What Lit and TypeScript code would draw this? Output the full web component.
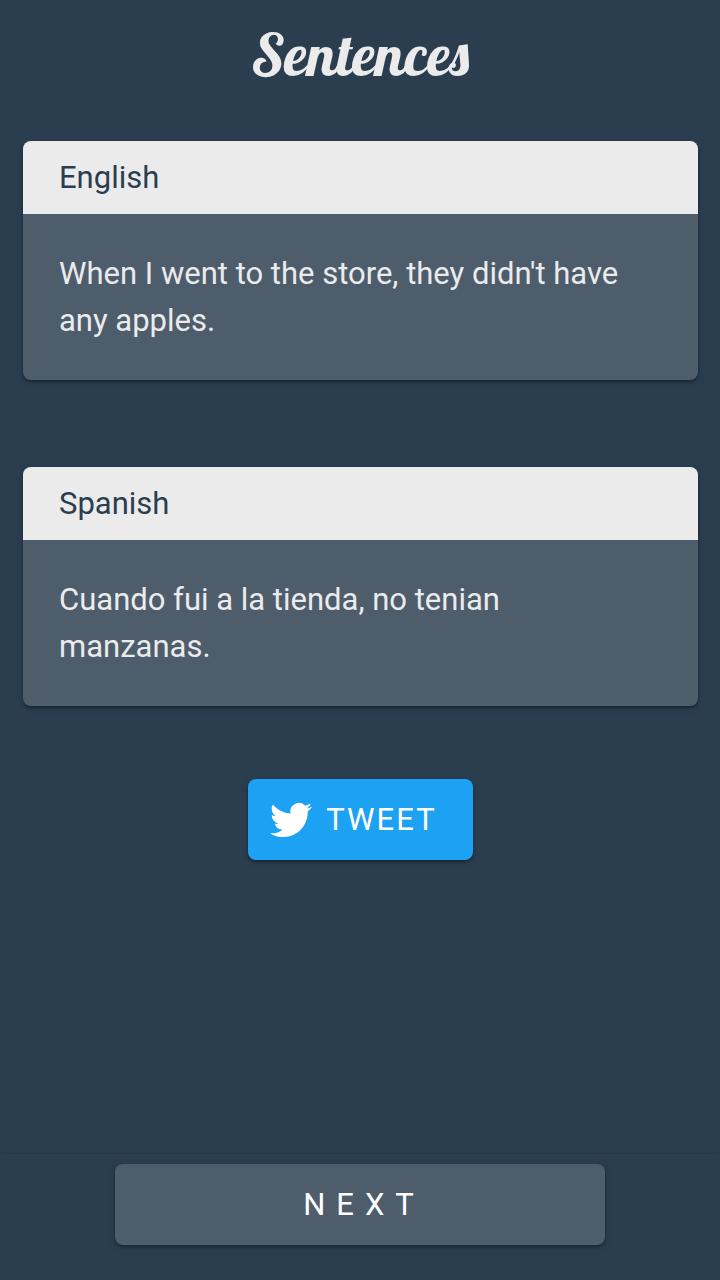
import { LitElement, html, css } from "lit";
import { customElement, property, state } from "lit/decorators.js";

const raised = css`
  .raised {
    border-radius: 8px;
    box-shadow: 0 2px 6px rgba(0, 0, 0, 0.28), 0 2px 2px rgba(0, 0, 0, 0.2);
  }
`;

@customElement("sentence-card")
export class SentenceCard extends LitElement {
  @property() language = "";
  @property() lang = "en";
  @property() sentence = "";

  static styles = [
    raised,
    css`
      :host {
        display: block;
      }
      .card {
        overflow: hidden;
        background: #4e5d6c;
      }
      .heading {
        margin: 0;
        padding: 13px 36px;
        background: #ebebeb;
        color: #2b3e50;
        font-size: 31px;
        font-weight: 400;
        line-height: 47px;
      }
      .sentence {
        margin: 0;
        padding: 36px 44px 36px 36px;
        color: #ebebeb;
        font-size: 31px;
        line-height: 47px;
      }
    `,
  ];

  render() {
    return html`
      <section class="card raised">
        <h2 class="heading">${this.language}</h2>
        <p class="sentence" lang=${this.lang}>${this.sentence}</p>
      </section>
    `;
  }
}

@customElement("app-root")
export class AppRoot extends LitElement {
  @state() private index = 0;

  private pairs = [
    {
      english: "When I went to the store, they didn't have any apples.",
      spanish: "Cuando fui a la tienda, no tenian manzanas.",
    },
  ];

  static styles = [
    raised,
    css`
      :host {
        display: flex;
        flex-direction: column;
        min-height: 100vh;
        background: #2b3e50;
        color: #ebebeb;
        font-family: Roboto, "Noto Sans", sans-serif;
      }
      .title {
        margin: 0;
        padding: 16px 0 49px;
        text-align: center;
        font-family: Lobster, "Liberation Serif", serif;
        font-size: 59px;
        font-weight: 400;
        line-height: 76px;
      }
      .content {
        flex: 1;
        display: flex;
        flex-direction: column;
        padding: 0 22px 0 23px;
      }
      .cards {
        display: grid;
        gap: 87px;
      }
      .button {
        display: flex;
        align-items: center;
        justify-content: center;
        height: 81px;
        border: 0;
        color: #fff;
        font-family: inherit;
        font-size: 31px;
        text-decoration: none;
        text-transform: uppercase;
        cursor: pointer;
      }
      .tweet {
        align-self: center;
        gap: 14px;
        margin-top: 73px;
        padding: 0 36px 0 22px;
        background: #1da1f2;
        letter-spacing: 2px;
      }
      .bird {
        width: 42px;
        height: 42px;
        fill: currentColor;
      }
      .footer {
        display: flex;
        justify-content: center;
        padding: 10px 0 35px;
        box-shadow: 0 -1px 2px rgba(0, 0, 0, 0.16);
      }
      .next {
        width: 68%;
        padding: 0 0 0 8px;
        background: #4e5d6c;
        letter-spacing: 11px;
      }
    `,
  ];

  private next() {
    this.index = (this.index + 1) % this.pairs.length;
  }

  render() {
    const pair = this.pairs[this.index];
    return html`
      <header><h1 class="title">Sentences</h1></header>
      <main class="content">
        <div class="cards">
          <sentence-card language="English" lang="en" .sentence=${pair.english}></sentence-card>
          <sentence-card language="Spanish" lang="es" .sentence=${pair.spanish}></sentence-card>
        </div>
        <a class="button tweet raised" href="#tweet">
          <svg class="bird" viewBox="0 0 24 24" aria-hidden="true">
            <path
              d="M23.953 4.57a10 10 0 0 1-2.825.775 4.958 4.958 0 0 0 2.163-2.723c-.951.555-2.005.959-3.127 1.184a4.92 4.92 0 0 0-8.384 4.482C7.69 8.095 4.067 6.13 1.64 3.162a4.822 4.822 0 0 0-.666 2.475c0 1.71.87 3.213 2.188 4.096a4.904 4.904 0 0 1-2.228-.616v.06a4.923 4.923 0 0 0 3.946 4.827 4.996 4.996 0 0 1-2.212.085 4.936 4.936 0 0 0 4.604 3.417 9.867 9.867 0 0 1-6.102 2.105c-.39 0-.779-.023-1.17-.067a13.995 13.995 0 0 0 7.557 2.209c9.053 0 13.998-7.496 13.998-13.985 0-.21 0-.42-.015-.63A9.935 9.935 0 0 0 24 4.59z"
            />
          </svg>
          Tweet
        </a>
      </main>
      <footer class="footer">
        <button class="button next raised" type="button" @click=${this.next}>Next</button>
      </footer>
    `;
  }
}
